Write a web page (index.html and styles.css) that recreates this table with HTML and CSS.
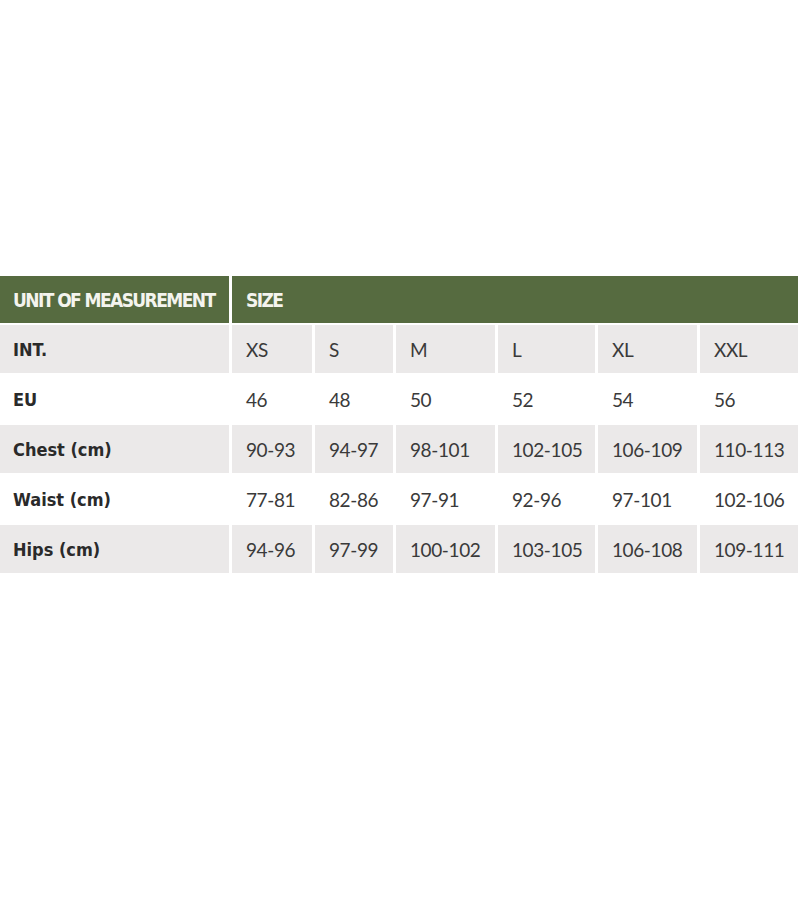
FILE: index.html
```html
<!DOCTYPE html>
<html lang="en">
<head>
<meta charset="utf-8">
<title>Size chart</title>
<link rel="stylesheet" href="styles.css">
</head>
<body>
<div class="page">
  <div class="chart">
    <div class="cell head first">UNIT OF MEASUREMENT</div>
    <div class="cell head size">SIZE</div>

    <div class="cell label gray">INT.</div>
    <div class="cell gray">XS</div>
    <div class="cell gray">S</div>
    <div class="cell gray">M</div>
    <div class="cell gray">L</div>
    <div class="cell gray">XL</div>
    <div class="cell gray">XXL</div>

    <div class="cell label">EU</div>
    <div class="cell">46</div>
    <div class="cell">48</div>
    <div class="cell">50</div>
    <div class="cell">52</div>
    <div class="cell">54</div>
    <div class="cell">56</div>

    <div class="cell label gray">Chest (cm)</div>
    <div class="cell gray">90-93</div>
    <div class="cell gray">94-97</div>
    <div class="cell gray">98-101</div>
    <div class="cell gray">102-105</div>
    <div class="cell gray">106-109</div>
    <div class="cell gray">110-113</div>

    <div class="cell label">Waist (cm)</div>
    <div class="cell">77-81</div>
    <div class="cell">82-86</div>
    <div class="cell">97-91</div>
    <div class="cell">92-96</div>
    <div class="cell">97-101</div>
    <div class="cell">102-106</div>

    <div class="cell label gray">Hips (cm)</div>
    <div class="cell gray">94-96</div>
    <div class="cell gray">97-99</div>
    <div class="cell gray">100-102</div>
    <div class="cell gray">103-105</div>
    <div class="cell gray">106-108</div>
    <div class="cell gray">109-111</div>
  </div>
</div>
</body>
</html>
```

FILE: styles.css
```css
html, body {
  margin: 0;
  padding: 0;
  background: #ffffff;
}

.page {
  width: 800px;
  height: 900px;
  padding-top: 276px;
  box-sizing: border-box;
}

.chart {
  display: grid;
  width: 798px;
  grid-template-columns: 229px 80px 78px 99px 97px 99px 98px;
  grid-template-rows: 47px repeat(5, 48px);
  column-gap: 3px;
  row-gap: 2px;
  font-family: "Lato", "DejaVu Sans", sans-serif;
  font-size: 19px;
  letter-spacing: -0.4px;
  color: #3a3a3a;
}

.cell {
  display: flex;
  align-items: center;
  padding-left: 14px;
  box-sizing: border-box;
  white-space: nowrap;
}

.cell.gray {
  background: #ebe9e9;
}

.head {
  background: #566b40;
  color: #f4f4ee;
  font-family: "DejaVu Sans Condensed", "DejaVu Sans", sans-serif;
  font-stretch: condensed;
  font-weight: bold;
  font-size: 19px;
  letter-spacing: -1.6px;
}

.head.first {
  padding-left: 13px;
}

.head.size {
  grid-column: 2 / 8;
}

.label {
  padding-left: 13px;
  font-family: "DejaVu Sans Condensed", "DejaVu Sans", sans-serif;
  font-stretch: condensed;
  font-weight: bold;
  font-size: 18px;
  letter-spacing: 0;
  color: #2a2a2a;
}
```
